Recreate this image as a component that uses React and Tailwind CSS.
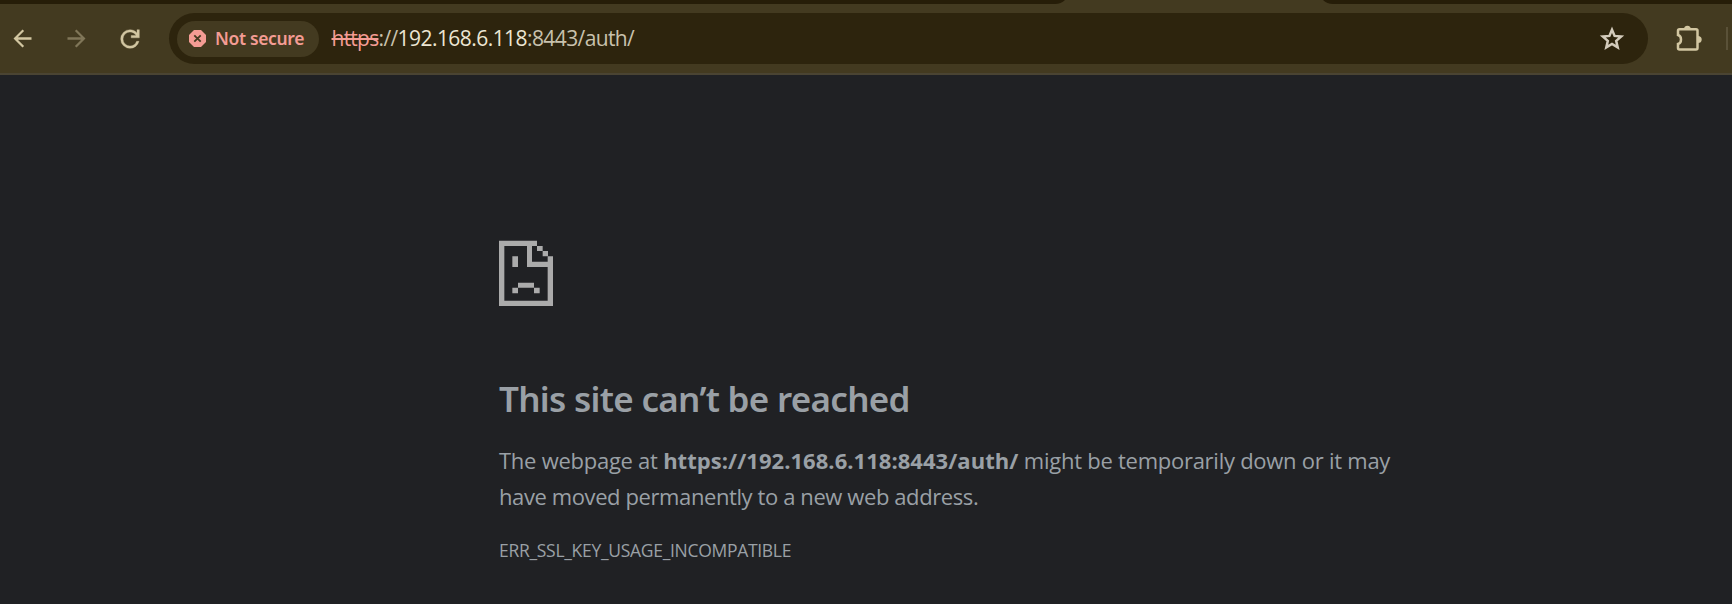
import React from "react";

function Toolbar() {
  return (
    <header className="h-[75px] shrink-0 border-b-2 border-[#4a4433] bg-[#433a20]">
      <div className="flex h-1 justify-between">
        <svg className="h-1 w-[1065px]" viewBox="0 0 1065 4"><path d="M0 0H1065Q1061 4 1055 4H0Z" fill="#261d08" /></svg>
        <svg className="h-1 w-[409px]" viewBox="0 0 409 4"><path d="M0 0H409V4H10Q4 4 0 0Z" fill="#261d08" /></svg>
      </div>
      <div className="flex h-[69px] items-center">
        <svg className="ml-[8.500px] size-[27px] shrink-0" viewBox="0 0 24 24" fill="#d2c6a1"><path d="M20 10.800H7.830l5.590-5.390L12 4l-8 8 8 8 1.410-1.410L7.830 13.200H20z" /></svg>
        <svg className="ml-[27px] size-[27px] shrink-0" viewBox="0 0 24 24" fill="#807658"><path d="M12 4l-1.410 1.410L16.170 10.800H4v2.400h12.170l-5.580 5.390L12 20l8-8z" /></svg>
        <svg className="ml-[26.500px] size-[28px] shrink-0" viewBox="0 0 24 24" fill="#d2c6a1" stroke="#d2c6a1" strokeWidth="0.300"><path d="M12 20q-3.350 0-5.675-2.325T4 12t2.325-5.675T12 4q1.725 0 3.300.713T18 6.750V4h2v7h-7V9h4.200q-.8-1.400-2.187-2.200T12 6Q9.500 6 7.750 7.750T6 12t1.750 4.250T12 18q1.925 0 3.475-1.100T17.650 14h2.100q-.7 2.650-2.850 4.325T12 20" /></svg>
        <div className="ml-[25px] flex h-[51px] w-[1479px] shrink-0 items-center rounded-full bg-[#2d240d] pl-2">
          <div className="flex h-9 w-[142px] items-center rounded-full bg-[#433a20] pl-3">
            <svg className="size-[17px] shrink-0" viewBox="0 0 17 17"><path d="M5 0h7l5 5v7l-5 5H5l-5-5V5Z" fill="#f49c94" /><path d="M5.300 5.300l6.400 6.400M11.700 5.300l-6.400 6.400" stroke="#433a20" strokeWidth="1.800" /></svg>
            <span className="ml-[9px] whitespace-nowrap font-['Noto_Sans',sans-serif] text-[17.500px] font-semibold tracking-[-0.350px] text-[#f49c94]">Not secure</span>
          </div>
          <div className="ml-[12.500px] whitespace-nowrap text-[21px] tracking-[-0.610px] text-[#c9c2ae]">
            <span className="tracking-[-0.750px] text-[#f49c94] line-through">https</span>://<span className="tracking-[-0.550px] text-[#ece6d3]">192.168.6.118</span>:8443/auth/
          </div>
          <svg className="ml-auto mr-[23px] size-[26px]" viewBox="0 0 26 26" fill="none" stroke="#d3cbbb" strokeWidth="2.500"><path d="M13 3.800L15.600 9.900L22.200 10.500L17.200 14.900L18.700 21.400L13 18L7.300 21.400L8.800 14.900L3.800 10.500L10.400 9.900Z" /></svg>
        </div>
        <svg className="ml-[27.500px] size-[27px] shrink-0" viewBox="0 0 27 27">
          <path d="M3.500 4.200H20Q21.500 4.200 21.500 5.700V23Q21.500 24.500 20 24.500H3.500Q2 24.500 2 23V19C6 18 6 11 2 10V5.700Q2 4.200 3.500 4.200Z" fill="none" stroke="#d2c6a1" strokeWidth="2.500" />
          <path d="M8 4.300a3.400 3.600 0 0 1 6.800 0ZM21.800 11a3.900 3.500 0 0 1 0 7Z" fill="#d2c6a1" />
        </svg>
        <div className="ml-[23.500px] h-[23px] w-[2px] bg-[#5a5138]" />
      </div>
    </header>
  );
}

function SadPageIcon() {
  return (
    <svg className="h-[66px] w-[55px]" viewBox="57 45 165 198" fill="#ababab">
      <path d="M57 47H171V63H73V227H203V126H141V63H156V110H203V94H219V243H57Z" />
      <path d="M171 63h17v15h-17zM188 78h16v16h-16zM97 94h17v32h-17zM114 173h48v15h-48zM97 188h17v17h-17zM162 188h17v17h-17z" />
    </svg>
  );
}

export default function App() {
  return (
    <div className="flex h-[604px] flex-col overflow-hidden bg-[#202124] font-['Open_Sans',sans-serif]">
      <Toolbar />
      <main className="pl-[499px] pt-[165px] text-[#9aa0a6]">
        <SadPageIcon />
        <h1 className="mt-[71px] font-['Noto_Sans',sans-serif] text-[35px] font-semibold leading-[44px] tracking-[-0.700px]">This site can’t be reached</h1>
        <p className="mt-[21px] whitespace-nowrap text-[22px] leading-9 tracking-[-0.260px]">
          The webpage at <b className="font-bold tracking-[0.040px]">https://192.168.6.118:8443/auth/</b> might be temporarily down or it may
          <br />
          <span className="tracking-[-0.400px]">have moved permanently to a new web address.</span>
        </p>
        <p className="mt-[22px] text-[17.500px] leading-[29px] tracking-[-0.300px]">ERR_SSL_KEY_USAGE_INCOMPATIBLE</p>
      </main>
    </div>
  );
}
